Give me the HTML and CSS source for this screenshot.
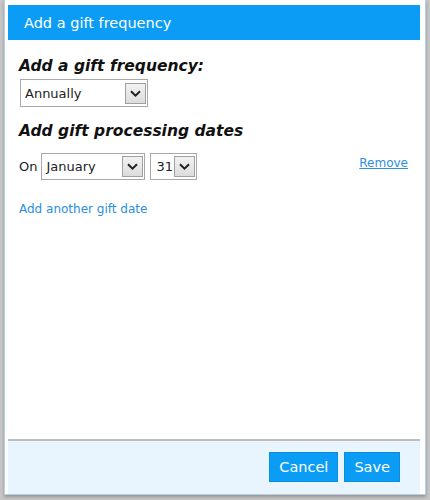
FILE: index.html
```html
<!DOCTYPE html>
<html>
<head>
<meta charset="utf-8">
<link rel="stylesheet" href="styles.css">
</head>
<body>
<div class="page">
  <div class="dialog">
    <div class="header">Add a gift frequency</div>
    <div class="content">
      <h2 class="heading">Add a gift frequency:</h2>
      <div class="select sel-freq">
        <span class="sel-text">Annually</span>
        <span class="sel-btn"><svg width="11" height="7" viewBox="0 0 11 7"><path d="M1 1.2 L5.5 5.6 L10 1.2" fill="none" stroke="#222" stroke-width="2"/></svg></span>
      </div>
      <h2 class="heading heading2">Add gift processing dates</h2>
      <div class="date-row">
        <span class="on">On</span>
        <div class="select sel-month">
          <span class="sel-text">January</span>
          <span class="sel-btn"><svg width="11" height="7" viewBox="0 0 11 7"><path d="M1 1.2 L5.5 5.6 L10 1.2" fill="none" stroke="#222" stroke-width="2"/></svg></span>
        </div>
        <div class="select sel-day">
          <span class="sel-text">31</span>
          <span class="sel-btn"><svg width="11" height="7" viewBox="0 0 11 7"><path d="M1 1.2 L5.5 5.6 L10 1.2" fill="none" stroke="#222" stroke-width="2"/></svg></span>
        </div>
        <a class="remove" href="#">Remove</a>
      </div>
      <a class="add-date" href="#">Add another gift date</a>
    </div>
    <div class="footer">
      <button class="btn">Cancel</button>
      <button class="btn">Save</button>
    </div>
  </div>
</div>
</body>
</html>
```
FILE: styles.css
```css
html, body {
  margin: 0;
  padding: 0;
}
body {
  background: #c6c6c6;
  font-family: "DejaVu Sans", Verdana, sans-serif;
  width: 430px;
  height: 500px;
  overflow: hidden;
}
.page {
  padding: 0 4px;
}
.dialog {
  box-sizing: border-box;
  height: 495px;
  background: #fff;
  border: 1px solid #b9cfe2;
  border-top: none;
  padding: 5px 5px 0 3px;
  display: flex;
  flex-direction: column;
  box-shadow: 0 2px 3px rgba(0,0,0,0.25);
}
.header {
  box-sizing: border-box;
  height: 35px;
  background: #0b9df6;
  color: #fff;
  font-size: 14.5px;
  line-height: 20px;
  padding: 8px 0 0 16px;
}
.content {
  flex: 1;
  padding: 16px 11px 0 11px;
}
.heading {
  margin: 0;
  font-size: 15.5px;
  font-weight: bold;
  font-style: italic;
  color: #111;
  line-height: 20px;
}
.heading2 {
  margin-top: 14px;
}
.select {
  box-sizing: border-box;
  display: flex;
  align-items: center;
  justify-content: space-between;
  border: 1px solid #a8a8a8;
  background: #fff;
  height: 28px;
  padding: 0 1px 0 4px;
  font-size: 13px;
  color: #222;
}
.sel-freq {
  width: 128px;
  margin: 3px 0 0 1px;
}
.sel-btn {
  box-sizing: border-box;
  width: 21px;
  height: 21px;
  border: 1px solid #a0a0a0;
  background: linear-gradient(#f2f2f2, #dcdcdc);
  display: flex;
  align-items: center;
  justify-content: center;
}
.date-row {
  display: flex;
  align-items: center;
  margin-top: 12px;
}
.on {
  font-size: 13px;
  color: #222;
  margin-right: 4px;
}
.sel-month {
  width: 104px;
  height: 27px;
}
.sel-day {
  width: 47px;
  height: 27px;
  margin-left: 5px;
  padding-left: 5px;
}
.remove {
  margin-left: auto;
  margin-right: 1px;
  font-size: 12px;
  color: #2f8fe0;
  text-decoration: underline;
  position: relative;
  top: -4px;
}
.add-date {
  display: block;
  margin-top: 22px;
  font-size: 12px;
  color: #2a8ee0;
  text-decoration: none;
}
.footer {
  box-sizing: border-box;
  height: 55px;
  background: #e9f5fe;
  border-top: 2px solid #bdbdbd;
  display: flex;
  justify-content: flex-end;
  align-items: flex-start;
  gap: 6px;
  padding: 11px 20px 0 0;
}
.btn {
  height: 30px;
  background: #0b9df6;
  border: 1px solid #0a8ede;
  color: #fff;
  font-family: "DejaVu Sans", Verdana, sans-serif;
  font-size: 14.5px;
  padding: 0 9px;
  cursor: pointer;
}
```
